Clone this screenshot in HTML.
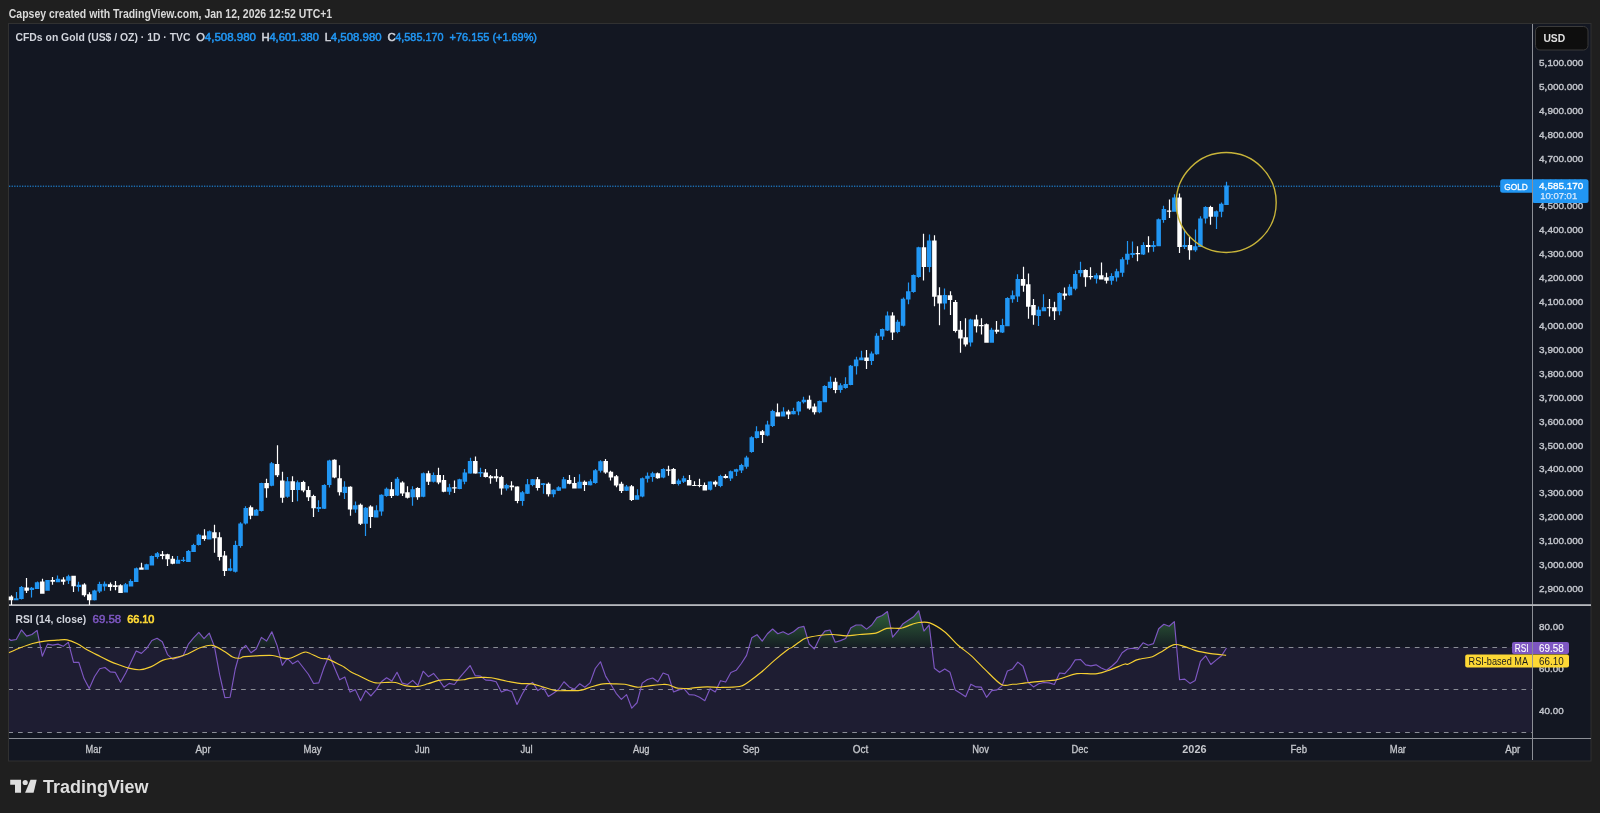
<!DOCTYPE html><html><head><meta charset="utf-8"><style>html,body{margin:0;padding:0;background:#1f1f1f;width:1600px;height:813px;overflow:hidden}</style></head><body><svg width="1600" height="813" viewBox="0 0 1600 813" style="display:block;will-change:transform;font-family:'Liberation Sans',sans-serif"><rect x="0" y="0" width="1600" height="813" fill="#1f1f1f"/><rect x="8.5" y="23.5" width="1582.5" height="737.5" fill="#131722" stroke="#313131" stroke-width="1"/><rect x="9" y="647.4" width="1523" height="85" fill="#1e1d32"/><text x="8.80" y="17.90" font-size="12.2" fill="#d9d9d9" font-weight="700" textLength="323.4" lengthAdjust="spacingAndGlyphs">Capsey created with TradingView.com, Jan 12, 2026 12:52 UTC+1</text><text x="15.50" y="40.90" font-size="11" fill="#d1d4dc" font-weight="700" textLength="175.0" lengthAdjust="spacingAndGlyphs">CFDs on Gold (US$ / OZ) · 1D · TVC</text><text x="196.20" y="40.90" font-size="11" fill="#d1d4dc" stroke="#d1d4dc" stroke-width="0.5" textLength="8.6" lengthAdjust="spacingAndGlyphs">O</text><text x="204.80" y="40.90" font-size="11" fill="#2196f3" stroke="#2196f3" stroke-width="0.5" textLength="51.2" lengthAdjust="spacingAndGlyphs">4,508.980</text><text x="261.40" y="40.90" font-size="11" fill="#d1d4dc" stroke="#d1d4dc" stroke-width="0.5" textLength="8.2" lengthAdjust="spacingAndGlyphs">H</text><text x="269.40" y="40.90" font-size="11" fill="#2196f3" stroke="#2196f3" stroke-width="0.5" textLength="49.6" lengthAdjust="spacingAndGlyphs">4,601.380</text><text x="324.80" y="40.90" font-size="11" fill="#d1d4dc" stroke="#d1d4dc" stroke-width="0.5" textLength="6.4" lengthAdjust="spacingAndGlyphs">L</text><text x="330.80" y="40.90" font-size="11" fill="#2196f3" stroke="#2196f3" stroke-width="0.5" textLength="50.8" lengthAdjust="spacingAndGlyphs">4,508.980</text><text x="387.40" y="40.90" font-size="11" fill="#d1d4dc" stroke="#d1d4dc" stroke-width="0.5" textLength="8.2" lengthAdjust="spacingAndGlyphs">C</text><text x="395.30" y="40.90" font-size="11" fill="#2196f3" stroke="#2196f3" stroke-width="0.5" textLength="48.2" lengthAdjust="spacingAndGlyphs">4,585.170</text><text x="449.60" y="40.90" font-size="11" fill="#2196f3" stroke="#2196f3" stroke-width="0.5" textLength="87.4" lengthAdjust="spacingAndGlyphs">+76.155 (+1.69%)</text><rect x="1532" y="24" width="1" height="736" fill="#8c8f96"/><rect x="9" y="604.2" width="1582" height="1.8" fill="#b6b8bd"/><rect x="9" y="738" width="1582" height="1" fill="#8c8f96"/><text x="1539.10" y="592.02" font-size="9.5" fill="#c0c3ca" stroke="#c0c3ca" stroke-width="0.4" textLength="44.2" lengthAdjust="spacingAndGlyphs">2,900.000</text><text x="1539.10" y="568.11" font-size="9.5" fill="#c0c3ca" stroke="#c0c3ca" stroke-width="0.4" textLength="44.2" lengthAdjust="spacingAndGlyphs">3,000.000</text><text x="1539.10" y="544.20" font-size="9.5" fill="#c0c3ca" stroke="#c0c3ca" stroke-width="0.4" textLength="44.2" lengthAdjust="spacingAndGlyphs">3,100.000</text><text x="1539.10" y="520.29" font-size="9.5" fill="#c0c3ca" stroke="#c0c3ca" stroke-width="0.4" textLength="44.2" lengthAdjust="spacingAndGlyphs">3,200.000</text><text x="1539.10" y="496.38" font-size="9.5" fill="#c0c3ca" stroke="#c0c3ca" stroke-width="0.4" textLength="44.2" lengthAdjust="spacingAndGlyphs">3,300.000</text><text x="1539.10" y="472.47" font-size="9.5" fill="#c0c3ca" stroke="#c0c3ca" stroke-width="0.4" textLength="44.2" lengthAdjust="spacingAndGlyphs">3,400.000</text><text x="1539.10" y="448.56" font-size="9.5" fill="#c0c3ca" stroke="#c0c3ca" stroke-width="0.4" textLength="44.2" lengthAdjust="spacingAndGlyphs">3,500.000</text><text x="1539.10" y="424.65" font-size="9.5" fill="#c0c3ca" stroke="#c0c3ca" stroke-width="0.4" textLength="44.2" lengthAdjust="spacingAndGlyphs">3,600.000</text><text x="1539.10" y="400.74" font-size="9.5" fill="#c0c3ca" stroke="#c0c3ca" stroke-width="0.4" textLength="44.2" lengthAdjust="spacingAndGlyphs">3,700.000</text><text x="1539.10" y="376.83" font-size="9.5" fill="#c0c3ca" stroke="#c0c3ca" stroke-width="0.4" textLength="44.2" lengthAdjust="spacingAndGlyphs">3,800.000</text><text x="1539.10" y="352.92" font-size="9.5" fill="#c0c3ca" stroke="#c0c3ca" stroke-width="0.4" textLength="44.2" lengthAdjust="spacingAndGlyphs">3,900.000</text><text x="1539.10" y="329.01" font-size="9.5" fill="#c0c3ca" stroke="#c0c3ca" stroke-width="0.4" textLength="44.2" lengthAdjust="spacingAndGlyphs">4,000.000</text><text x="1539.10" y="305.10" font-size="9.5" fill="#c0c3ca" stroke="#c0c3ca" stroke-width="0.4" textLength="44.2" lengthAdjust="spacingAndGlyphs">4,100.000</text><text x="1539.10" y="281.19" font-size="9.5" fill="#c0c3ca" stroke="#c0c3ca" stroke-width="0.4" textLength="44.2" lengthAdjust="spacingAndGlyphs">4,200.000</text><text x="1539.10" y="257.28" font-size="9.5" fill="#c0c3ca" stroke="#c0c3ca" stroke-width="0.4" textLength="44.2" lengthAdjust="spacingAndGlyphs">4,300.000</text><text x="1539.10" y="233.37" font-size="9.5" fill="#c0c3ca" stroke="#c0c3ca" stroke-width="0.4" textLength="44.2" lengthAdjust="spacingAndGlyphs">4,400.000</text><text x="1539.10" y="209.46" font-size="9.5" fill="#c0c3ca" stroke="#c0c3ca" stroke-width="0.4" textLength="44.2" lengthAdjust="spacingAndGlyphs">4,500.000</text><text x="1539.10" y="185.55" font-size="9.5" fill="#c0c3ca" stroke="#c0c3ca" stroke-width="0.4" textLength="44.2" lengthAdjust="spacingAndGlyphs">4,600.000</text><text x="1539.10" y="161.64" font-size="9.5" fill="#c0c3ca" stroke="#c0c3ca" stroke-width="0.4" textLength="44.2" lengthAdjust="spacingAndGlyphs">4,700.000</text><text x="1539.10" y="137.73" font-size="9.5" fill="#c0c3ca" stroke="#c0c3ca" stroke-width="0.4" textLength="44.2" lengthAdjust="spacingAndGlyphs">4,800.000</text><text x="1539.10" y="113.82" font-size="9.5" fill="#c0c3ca" stroke="#c0c3ca" stroke-width="0.4" textLength="44.2" lengthAdjust="spacingAndGlyphs">4,900.000</text><text x="1539.10" y="89.91" font-size="9.5" fill="#c0c3ca" stroke="#c0c3ca" stroke-width="0.4" textLength="44.2" lengthAdjust="spacingAndGlyphs">5,000.000</text><text x="1539.10" y="66.00" font-size="9.5" fill="#c0c3ca" stroke="#c0c3ca" stroke-width="0.4" textLength="44.2" lengthAdjust="spacingAndGlyphs">5,100.000</text><rect x="1535.5" y="26.5" width="52.5" height="23.5" rx="4.5" fill="#0e0e0e" stroke="#3b3b3b" stroke-width="1"/><text x="1543.40" y="41.90" font-size="11" fill="#e0e0e0" font-weight="700" textLength="21.8" lengthAdjust="spacingAndGlyphs">USD</text><text x="85.50" y="753.30" font-size="10" fill="#c5c7cc" stroke="#c5c7cc" stroke-width="0.3" textLength="16" lengthAdjust="spacingAndGlyphs">Mar</text><text x="195.50" y="753.30" font-size="10" fill="#c5c7cc" stroke="#c5c7cc" stroke-width="0.3" textLength="15.2" lengthAdjust="spacingAndGlyphs">Apr</text><text x="303.50" y="753.30" font-size="10" fill="#c5c7cc" stroke="#c5c7cc" stroke-width="0.3" textLength="18" lengthAdjust="spacingAndGlyphs">May</text><text x="414.75" y="753.30" font-size="10" fill="#c5c7cc" stroke="#c5c7cc" stroke-width="0.3" textLength="15" lengthAdjust="spacingAndGlyphs">Jun</text><text x="520.50" y="753.30" font-size="10" fill="#c5c7cc" stroke="#c5c7cc" stroke-width="0.3" textLength="12.2" lengthAdjust="spacingAndGlyphs">Jul</text><text x="633.00" y="753.30" font-size="10" fill="#c5c7cc" stroke="#c5c7cc" stroke-width="0.3" textLength="16.5" lengthAdjust="spacingAndGlyphs">Aug</text><text x="742.75" y="753.30" font-size="10" fill="#c5c7cc" stroke="#c5c7cc" stroke-width="0.3" textLength="16.7" lengthAdjust="spacingAndGlyphs">Sep</text><text x="852.75" y="753.30" font-size="10" fill="#c5c7cc" stroke="#c5c7cc" stroke-width="0.3" textLength="15.5" lengthAdjust="spacingAndGlyphs">Oct</text><text x="972.25" y="753.30" font-size="10" fill="#c5c7cc" stroke="#c5c7cc" stroke-width="0.3" textLength="16.7" lengthAdjust="spacingAndGlyphs">Nov</text><text x="1071.55" y="753.30" font-size="10" fill="#c5c7cc" stroke="#c5c7cc" stroke-width="0.3" textLength="16.7" lengthAdjust="spacingAndGlyphs">Dec</text><text x="1182.30" y="753.30" font-size="10" fill="#c5c7cc" font-weight="700" textLength="24.2" lengthAdjust="spacingAndGlyphs">2026</text><text x="1290.50" y="753.30" font-size="10" fill="#c5c7cc" stroke="#c5c7cc" stroke-width="0.3" textLength="16.5" lengthAdjust="spacingAndGlyphs">Feb</text><text x="1389.80" y="753.30" font-size="10" fill="#c5c7cc" stroke="#c5c7cc" stroke-width="0.3" textLength="16.2" lengthAdjust="spacingAndGlyphs">Mar</text><text x="1505.25" y="753.30" font-size="10" fill="#c5c7cc" stroke="#c5c7cc" stroke-width="0.3" textLength="15" lengthAdjust="spacingAndGlyphs">Apr</text><line x1="9" y1="647.50" x2="1532" y2="647.50" stroke="#8a8d96" stroke-width="1" stroke-dasharray="4.7 5" stroke-dashoffset="0.7"/><line x1="9" y1="689.50" x2="1532" y2="689.50" stroke="#8a8d96" stroke-width="1" stroke-dasharray="4.7 5" stroke-dashoffset="0.7"/><line x1="9" y1="732.50" x2="1532" y2="732.50" stroke="#8a8d96" stroke-width="1" stroke-dasharray="4.7 5" stroke-dashoffset="0.7"/><text x="1539.10" y="629.70" font-size="9.5" fill="#c0c3ca" stroke="#c0c3ca" stroke-width="0.4" textLength="24.6" lengthAdjust="spacingAndGlyphs">80.00</text><text x="1539.10" y="672.00" font-size="9.5" fill="#c0c3ca" stroke="#c0c3ca" stroke-width="0.4" textLength="24.6" lengthAdjust="spacingAndGlyphs">60.00</text><text x="1539.10" y="714.10" font-size="9.5" fill="#c0c3ca" stroke="#c0c3ca" stroke-width="0.4" textLength="24.6" lengthAdjust="spacingAndGlyphs">40.00</text><text x="15.50" y="623.30" font-size="11" fill="#d1d4dc" font-weight="700" textLength="70.6" lengthAdjust="spacingAndGlyphs">RSI (14, close)</text><text x="92.60" y="623.30" font-size="11" fill="#7e57c2" stroke="#7e57c2" stroke-width="0.5" textLength="28.6" lengthAdjust="spacingAndGlyphs">69.58</text><text x="127.20" y="623.30" font-size="11" fill="#fdd835" stroke="#fdd835" stroke-width="0.7" textLength="27.2" lengthAdjust="spacingAndGlyphs">66.10</text><defs><linearGradient id="gg" x1="0" y1="606" x2="0" y2="647.4" gradientUnits="userSpaceOnUse"><stop offset="0" stop-color="#4caf50" stop-opacity="0.55"/><stop offset="1" stop-color="#4caf50" stop-opacity="0.04"/></linearGradient><clipPath id="ob"><rect x="9" y="606" width="1523" height="41.4"/></clipPath></defs><path d="M9.00 638.96 L11.00 640.44 L16.22 639.46 L21.43 629.99 L26.65 636.14 L31.87 634.54 L37.08 630.35 L42.30 656.18 L47.52 644.13 L52.73 645.11 L57.95 644.13 L63.17 646.34 L68.38 642.29 L73.60 662.33 L78.82 662.33 L84.03 678.57 L89.25 688.41 L94.47 676.73 L99.68 668.73 L104.90 667.50 L110.12 671.81 L115.33 672.42 L120.55 682.26 L125.77 673.04 L130.98 661.97 L136.20 650.90 L141.42 653.36 L146.63 648.44 L151.85 640.44 L157.07 638.23 L162.28 641.67 L167.50 654.59 L172.72 659.14 L177.93 657.66 L183.15 655.82 L188.37 644.13 L193.58 637.98 L198.80 632.45 L204.02 638.60 L209.23 633.06 L214.45 646.59 L219.67 674.88 L224.88 697.64 L230.10 697.27 L235.32 668.73 L240.53 650.28 L245.75 645.36 L250.97 652.74 L256.18 649.05 L261.40 637.37 L266.62 641.06 L271.84 631.83 L277.05 645.36 L282.27 665.29 L287.49 658.28 L292.70 663.81 L297.92 660.74 L303.14 667.50 L308.35 674.27 L313.57 683.49 L318.79 682.88 L324.00 667.50 L329.22 655.20 L334.44 667.50 L339.65 679.80 L344.87 677.09 L350.09 692.10 L355.30 689.63 L360.52 700.72 L365.74 690.57 L370.95 695.99 L376.17 689.90 L381.39 681.78 L386.60 677.72 L391.82 681.10 L397.04 672.31 L402.25 683.13 L407.47 684.48 L412.69 680.42 L417.90 685.57 L423.12 671.22 L428.34 676.64 L433.55 673.39 L438.77 679.75 L443.99 687.19 L449.20 683.40 L454.42 684.48 L459.64 677.72 L464.85 671.63 L470.07 665.54 L475.29 675.69 L480.50 676.09 L485.72 680.15 L490.94 680.42 L496.15 681.78 L501.37 691.93 L506.59 689.90 L511.80 691.52 L517.02 704.51 L522.24 693.96 L527.45 685.16 L532.67 682.45 L537.89 690.57 L543.10 687.19 L548.32 696.39 L553.54 693.28 L558.75 689.22 L563.97 681.78 L569.19 686.92 L574.40 689.22 L579.62 683.81 L584.84 687.19 L590.05 682.86 L595.27 668.52 L600.49 661.75 L605.70 676.37 L610.92 684.48 L616.14 693.28 L621.35 699.37 L626.57 694.63 L631.79 708.17 L637.00 702.75 L642.22 683.13 L647.44 679.48 L652.65 677.99 L657.87 681.78 L663.09 672.98 L668.30 675.01 L673.52 691.93 L678.74 689.90 L683.95 688.54 L689.17 694.63 L694.39 695.04 L699.60 697.34 L704.82 700.72 L710.04 688.81 L715.25 691.93 L720.47 680.70 L725.69 682.05 L730.90 672.58 L736.12 670.28 L741.34 663.51 L746.55 655.39 L751.77 637.80 L756.99 634.69 L762.20 641.18 L767.42 633.74 L772.64 629.00 L777.85 633.74 L783.07 631.71 L788.29 634.42 L793.50 631.80 L798.72 627.47 L803.94 626.39 L809.16 643.98 L814.37 648.99 L819.59 637.89 L824.81 631.12 L830.02 630.04 L835.24 642.22 L840.46 640.60 L845.67 638.57 L850.89 627.74 L856.11 625.03 L861.32 625.03 L866.54 629.09 L871.76 625.03 L876.97 617.59 L882.19 615.56 L887.41 611.50 L892.62 637.21 L897.84 630.85 L903.06 623.68 L908.27 620.21 L913.49 616.83 L918.71 610.74 L923.92 631.03 L929.14 624.94 L934.36 668.25 L939.57 672.31 L944.79 668.92 L950.01 672.31 L955.22 689.90 L960.44 693.28 L965.66 696.66 L970.87 684.21 L976.09 686.92 L981.31 687.19 L986.52 697.34 L991.74 690.57 L996.96 689.90 L1002.17 685.57 L1007.39 670.95 L1012.61 668.92 L1017.82 662.16 L1023.04 666.22 L1028.26 682.45 L1033.47 686.92 L1038.69 683.81 L1043.91 682.45 L1049.12 682.86 L1054.34 684.48 L1059.56 672.98 L1064.77 673.66 L1069.99 667.98 L1075.21 659.86 L1080.42 659.45 L1085.64 664.86 L1090.86 665.81 L1096.07 664.86 L1101.29 667.98 L1106.51 670.28 L1111.72 666.22 L1116.94 661.48 L1122.16 652.68 L1127.37 649.03 L1132.59 648.22 L1137.81 649.30 L1143.02 642.81 L1148.24 645.24 L1153.46 643.62 L1158.67 628.73 L1163.89 624.27 L1169.11 626.30 L1174.32 621.56 L1179.54 679.75 L1184.76 679.07 L1189.97 683.40 L1195.19 680.42 L1200.41 661.48 L1205.62 655.80 L1210.84 664.46 L1216.06 660.13 L1221.27 656.07 L1226.49 647.95 L1226.49 647.4 L9.00 647.4 Z" fill="url(#gg)" clip-path="url(#ob)"/><path d="M9.00 638.96 L11.00 640.44 L16.22 639.46 L21.43 629.99 L26.65 636.14 L31.87 634.54 L37.08 630.35 L42.30 656.18 L47.52 644.13 L52.73 645.11 L57.95 644.13 L63.17 646.34 L68.38 642.29 L73.60 662.33 L78.82 662.33 L84.03 678.57 L89.25 688.41 L94.47 676.73 L99.68 668.73 L104.90 667.50 L110.12 671.81 L115.33 672.42 L120.55 682.26 L125.77 673.04 L130.98 661.97 L136.20 650.90 L141.42 653.36 L146.63 648.44 L151.85 640.44 L157.07 638.23 L162.28 641.67 L167.50 654.59 L172.72 659.14 L177.93 657.66 L183.15 655.82 L188.37 644.13 L193.58 637.98 L198.80 632.45 L204.02 638.60 L209.23 633.06 L214.45 646.59 L219.67 674.88 L224.88 697.64 L230.10 697.27 L235.32 668.73 L240.53 650.28 L245.75 645.36 L250.97 652.74 L256.18 649.05 L261.40 637.37 L266.62 641.06 L271.84 631.83 L277.05 645.36 L282.27 665.29 L287.49 658.28 L292.70 663.81 L297.92 660.74 L303.14 667.50 L308.35 674.27 L313.57 683.49 L318.79 682.88 L324.00 667.50 L329.22 655.20 L334.44 667.50 L339.65 679.80 L344.87 677.09 L350.09 692.10 L355.30 689.63 L360.52 700.72 L365.74 690.57 L370.95 695.99 L376.17 689.90 L381.39 681.78 L386.60 677.72 L391.82 681.10 L397.04 672.31 L402.25 683.13 L407.47 684.48 L412.69 680.42 L417.90 685.57 L423.12 671.22 L428.34 676.64 L433.55 673.39 L438.77 679.75 L443.99 687.19 L449.20 683.40 L454.42 684.48 L459.64 677.72 L464.85 671.63 L470.07 665.54 L475.29 675.69 L480.50 676.09 L485.72 680.15 L490.94 680.42 L496.15 681.78 L501.37 691.93 L506.59 689.90 L511.80 691.52 L517.02 704.51 L522.24 693.96 L527.45 685.16 L532.67 682.45 L537.89 690.57 L543.10 687.19 L548.32 696.39 L553.54 693.28 L558.75 689.22 L563.97 681.78 L569.19 686.92 L574.40 689.22 L579.62 683.81 L584.84 687.19 L590.05 682.86 L595.27 668.52 L600.49 661.75 L605.70 676.37 L610.92 684.48 L616.14 693.28 L621.35 699.37 L626.57 694.63 L631.79 708.17 L637.00 702.75 L642.22 683.13 L647.44 679.48 L652.65 677.99 L657.87 681.78 L663.09 672.98 L668.30 675.01 L673.52 691.93 L678.74 689.90 L683.95 688.54 L689.17 694.63 L694.39 695.04 L699.60 697.34 L704.82 700.72 L710.04 688.81 L715.25 691.93 L720.47 680.70 L725.69 682.05 L730.90 672.58 L736.12 670.28 L741.34 663.51 L746.55 655.39 L751.77 637.80 L756.99 634.69 L762.20 641.18 L767.42 633.74 L772.64 629.00 L777.85 633.74 L783.07 631.71 L788.29 634.42 L793.50 631.80 L798.72 627.47 L803.94 626.39 L809.16 643.98 L814.37 648.99 L819.59 637.89 L824.81 631.12 L830.02 630.04 L835.24 642.22 L840.46 640.60 L845.67 638.57 L850.89 627.74 L856.11 625.03 L861.32 625.03 L866.54 629.09 L871.76 625.03 L876.97 617.59 L882.19 615.56 L887.41 611.50 L892.62 637.21 L897.84 630.85 L903.06 623.68 L908.27 620.21 L913.49 616.83 L918.71 610.74 L923.92 631.03 L929.14 624.94 L934.36 668.25 L939.57 672.31 L944.79 668.92 L950.01 672.31 L955.22 689.90 L960.44 693.28 L965.66 696.66 L970.87 684.21 L976.09 686.92 L981.31 687.19 L986.52 697.34 L991.74 690.57 L996.96 689.90 L1002.17 685.57 L1007.39 670.95 L1012.61 668.92 L1017.82 662.16 L1023.04 666.22 L1028.26 682.45 L1033.47 686.92 L1038.69 683.81 L1043.91 682.45 L1049.12 682.86 L1054.34 684.48 L1059.56 672.98 L1064.77 673.66 L1069.99 667.98 L1075.21 659.86 L1080.42 659.45 L1085.64 664.86 L1090.86 665.81 L1096.07 664.86 L1101.29 667.98 L1106.51 670.28 L1111.72 666.22 L1116.94 661.48 L1122.16 652.68 L1127.37 649.03 L1132.59 648.22 L1137.81 649.30 L1143.02 642.81 L1148.24 645.24 L1153.46 643.62 L1158.67 628.73 L1163.89 624.27 L1169.11 626.30 L1174.32 621.56 L1179.54 679.75 L1184.76 679.07 L1189.97 683.40 L1195.19 680.42 L1200.41 661.48 L1205.62 655.80 L1210.84 664.46 L1216.06 660.13 L1221.27 656.07 L1226.49 647.95" fill="none" stroke="#7e57c2" stroke-width="1.15" stroke-linejoin="round"/><path d="M9.00 652.74 C10.88 651.92 16.37 649.36 20.30 647.82 C24.23 646.28 28.50 644.64 32.60 643.52 C36.70 642.39 40.80 641.61 44.90 641.06 C49.00 640.50 53.51 640.40 57.20 640.19 C60.89 639.99 63.76 639.27 67.04 639.83 C70.32 640.38 73.40 641.77 76.88 643.52 C80.37 645.26 84.06 648.13 87.95 650.28 C91.85 652.43 96.56 654.59 100.25 656.43 C103.94 658.28 106.91 659.94 110.09 661.35 C113.27 662.77 116.22 663.79 119.35 664.92 C122.48 666.05 125.49 667.32 128.88 668.12 C132.27 668.92 136.04 669.92 139.68 669.71 C143.32 669.51 146.86 668.48 150.75 666.89 C154.65 665.29 158.95 661.66 163.05 660.12 C167.15 658.58 171.25 658.69 175.35 657.66 C179.45 656.64 183.55 655.61 187.65 653.97 C191.75 652.33 195.85 649.26 199.95 647.82 C204.05 646.39 208.15 644.75 212.25 645.36 C216.35 645.98 221.16 649.56 224.55 651.51 C227.94 653.46 230.17 655.92 232.58 657.05 C235.00 658.17 237.08 658.34 239.04 658.28 C240.99 658.21 241.37 657.09 244.30 656.68 C247.23 656.27 251.89 656.02 256.60 655.82 C261.32 655.61 268.49 655.14 272.59 655.45 C276.69 655.75 278.33 657.19 281.20 657.66 C284.07 658.13 286.12 659.14 289.81 658.28 C293.50 657.41 300.27 653.42 303.34 652.49 C306.42 651.57 305.39 651.78 308.26 652.74 C311.13 653.70 317.28 657.21 320.56 658.28 C323.84 659.34 324.66 658.01 327.94 659.14 C331.22 660.26 337.56 663.75 340.24 665.04 C342.92 666.33 342.26 665.79 344.00 666.89 C345.74 668.00 348.41 670.33 350.67 671.69 C352.92 673.04 353.68 673.22 357.53 675.01 C361.38 676.81 369.26 681.21 373.77 682.45 C378.28 683.70 380.99 682.45 384.60 682.45 C388.20 682.45 392.04 681.94 395.42 682.45 C398.80 682.97 401.28 684.89 404.89 685.57 C408.50 686.24 413.24 686.81 417.07 686.51 C420.91 686.22 424.29 684.82 427.90 683.81 C431.51 682.79 435.11 681.15 438.72 680.42 C442.33 679.70 446.67 679.52 449.55 679.48 C452.43 679.43 453.63 680.11 456.00 680.15 C458.37 680.20 461.50 680.04 463.76 679.75 C466.01 679.46 466.76 678.78 469.53 678.40 C472.30 678.01 476.75 677.56 480.36 677.45 C483.97 677.34 487.35 677.22 491.18 677.72 C495.02 678.21 498.63 679.48 503.36 680.42 C508.10 681.37 514.86 682.84 519.60 683.40 C524.34 683.97 527.72 683.18 531.78 683.81 C535.84 684.44 539.90 686.06 543.96 687.19 C548.02 688.32 552.13 690.01 556.14 690.57 C560.14 691.14 564.68 690.57 568.00 690.57 C571.32 690.57 573.77 690.64 576.03 690.57 C578.28 690.51 578.81 690.84 581.53 690.17 C584.25 689.49 588.75 687.57 592.36 686.51 C595.97 685.45 599.80 684.26 603.18 683.81 C606.57 683.36 609.05 683.74 612.65 683.81 C616.26 683.88 620.77 683.65 624.83 684.21 C628.89 684.78 632.95 686.92 637.01 687.19 C641.07 687.46 644.91 686.29 649.19 685.84 C653.48 685.39 659.57 684.66 662.72 684.48 C665.88 684.30 665.88 684.19 668.14 684.76 C670.39 685.32 674.28 687.28 676.25 687.87 C678.23 688.45 678.04 688.16 680.00 688.27 C681.96 688.39 685.77 688.61 688.03 688.54 C690.28 688.48 690.36 688.14 693.53 687.87 C696.70 687.60 702.55 686.99 707.06 686.92 C711.57 686.85 715.18 687.53 720.60 687.46 C726.01 687.39 735.03 687.35 739.54 686.51 C744.05 685.68 744.05 684.82 747.66 682.45 C751.27 680.09 756.68 676.03 761.19 672.31 C765.70 668.58 770.21 663.96 774.72 660.13 C779.23 656.29 785.37 651.43 788.25 649.30 C791.13 647.17 790.14 648.57 792.00 647.36 C793.86 646.15 797.14 643.55 799.40 642.04 C801.65 640.53 802.25 639.39 805.53 638.29 C808.81 637.20 814.55 636.08 819.06 635.45 C823.57 634.82 828.08 634.44 832.60 634.51 C837.11 634.57 841.62 635.86 846.13 635.86 C850.64 635.86 854.70 634.96 859.66 634.51 C864.62 634.06 871.39 634.17 875.90 633.15 C880.41 632.14 882.89 629.21 886.72 628.42 C890.56 627.63 896.02 628.59 898.90 628.42 C901.78 628.24 901.81 628.06 904.00 627.38 C906.19 626.70 909.55 625.17 912.03 624.36 C914.51 623.55 915.94 622.75 918.88 622.51 C921.83 622.27 925.43 621.38 929.71 622.91 C934.00 624.45 939.86 627.99 944.60 631.71 C949.33 635.43 953.62 641.18 958.13 645.24 C962.64 649.30 967.15 652.01 971.66 656.07 C976.17 660.13 980.23 664.86 985.19 669.60 C990.15 674.34 996.92 682.05 1001.43 684.48 C1005.94 686.92 1009.83 684.26 1012.25 684.21 C1014.68 684.17 1014.04 684.39 1016.00 684.21 C1017.96 684.03 1021.77 683.42 1024.03 683.13 C1026.28 682.84 1026.36 682.79 1029.53 682.45 C1032.70 682.12 1038.78 681.48 1043.06 681.10 C1047.35 680.72 1051.86 680.72 1055.24 680.15 C1058.63 679.59 1059.75 678.80 1063.36 677.72 C1066.97 676.64 1071.25 674.34 1076.89 673.66 C1082.53 672.98 1091.55 674.34 1097.19 673.66 C1102.83 672.98 1106.21 671.18 1110.72 669.60 C1115.23 668.02 1121.37 665.09 1124.25 664.19 C1127.13 663.28 1126.04 664.86 1128.00 664.19 C1129.96 663.51 1133.77 661.03 1136.03 660.13 C1138.28 659.23 1138.81 659.34 1141.53 658.77 C1144.25 658.21 1148.75 658.10 1152.36 656.74 C1155.97 655.39 1159.57 652.68 1163.18 650.65 C1166.79 648.63 1170.40 645.24 1174.01 644.57 C1177.62 643.89 1181.23 645.58 1184.83 646.60 C1188.44 647.61 1191.60 649.53 1195.66 650.65 C1199.72 651.78 1204.91 652.68 1209.19 653.36 C1213.48 654.04 1218.55 654.38 1221.37 654.71 C1224.19 655.05 1225.32 655.28 1226.11 655.39" fill="none" stroke="#f5cf32" stroke-width="1.15"/><path fill="#2196f3" d="M15.90 591.88h1.2V600.14h-1.2ZM13.97 598.26h4.5v1.88h-4.5ZM20.90 585.88h1.2V599.38h-1.2ZM19.18 587.01h4.5v12.00h-4.5ZM30.90 587.01h1.2V597.51h-1.2ZM29.62 587.76h4.5v2.25h-4.5ZM36.90 581.38h1.2V588.88h-1.2ZM34.83 582.13h4.5v6.75h-4.5ZM46.90 579.88h1.2V590.76h-1.2ZM45.27 579.88h4.5v10.88h-4.5ZM56.90 575.38h1.2V582.13h-1.2ZM55.70 578.75h4.5v3.38h-4.5ZM67.90 574.63h1.2V584.01h-1.2ZM66.13 576.13h4.5v4.50h-4.5ZM77.90 581.76h1.2V591.51h-1.2ZM76.57 584.76h4.5v2.25h-4.5ZM93.90 589.63h1.2V600.51h-1.2ZM92.22 590.38h4.5v9.75h-4.5ZM98.90 581.76h1.2V593.01h-1.2ZM97.43 584.01h4.5v7.50h-4.5ZM103.90 581.46h1.2V590.87h-1.2ZM102.65 583.68h4.5v2.77h-4.5ZM124.90 583.12h1.2V592.54h-1.2ZM123.52 584.23h4.5v8.31h-4.5ZM129.90 579.25h1.2V586.45h-1.2ZM128.73 580.91h4.5v5.54h-4.5ZM135.90 567.62h1.2V582.02h-1.2ZM133.95 568.17h4.5v13.84h-4.5ZM145.90 563.74h1.2V569.83h-1.2ZM144.38 564.30h4.5v5.54h-4.5ZM150.90 555.44h1.2V565.40h-1.2ZM149.60 555.99h4.5v9.41h-4.5ZM156.90 552.12h1.2V558.76h-1.2ZM154.82 553.22h4.5v3.88h-4.5ZM176.90 555.99h1.2V563.74h-1.2ZM175.68 559.87h4.5v3.88h-4.5ZM182.90 557.10h1.2V562.08h-1.2ZM180.90 559.87h4.5v1.11h-4.5ZM187.90 549.90h1.2V562.08h-1.2ZM186.12 551.01h4.5v11.07h-4.5ZM192.90 543.81h1.2V552.12h-1.2ZM191.33 544.92h4.5v7.20h-4.5ZM197.90 533.85h1.2V545.39h-1.2ZM196.55 534.71h4.5v10.33h-4.5ZM208.90 530.41h1.2V539.54h-1.2ZM206.98 531.27h4.5v8.27h-4.5ZM229.90 558.82h1.2V571.22h-1.2ZM227.85 568.29h4.5v2.58h-4.5ZM234.90 540.74h1.2V572.60h-1.2ZM233.07 545.05h4.5v26.69h-4.5ZM239.90 522.31h1.2V547.63h-1.2ZM238.28 523.52h4.5v22.39h-4.5ZM244.90 506.30h1.2V524.38h-1.2ZM243.50 508.02h4.5v15.50h-4.5ZM255.90 508.88h1.2V515.77h-1.2ZM253.93 509.74h4.5v6.03h-4.5ZM260.90 482.71h1.2V511.47h-1.2ZM259.15 483.05h4.5v27.90h-4.5ZM270.90 462.04h1.2V486.15h-1.2ZM269.59 463.25h4.5v22.39h-4.5ZM286.90 477.02h1.2V497.69h-1.2ZM285.24 481.33h4.5v15.50h-4.5ZM296.90 480.47h1.2V501.13h-1.2ZM295.67 482.19h4.5v7.75h-4.5ZM317.90 500.35h1.2V512.04h-1.2ZM316.54 507.12h4.5v1.85h-4.5ZM323.90 484.36h1.2V508.96h-1.2ZM321.75 484.98h4.5v23.74h-4.5ZM328.90 459.76h1.2V487.44h-1.2ZM326.97 460.38h4.5v24.60h-4.5ZM343.90 481.29h1.2V499.12h-1.2ZM342.62 486.82h4.5v6.15h-4.5ZM354.90 501.58h1.2V512.65h-1.2ZM353.05 505.27h4.5v4.31h-4.5ZM364.90 507.12h1.2V536.02h-1.2ZM363.49 507.73h4.5v15.99h-4.5ZM375.90 505.27h1.2V517.57h-1.2ZM373.92 510.19h4.5v7.38h-4.5ZM380.90 494.20h1.2V515.73h-1.2ZM379.14 494.82h4.5v16.61h-4.5ZM385.90 487.44h1.2V496.66h-1.2ZM384.35 488.67h4.5v7.38h-4.5ZM396.90 476.98h1.2V496.05h-1.2ZM394.79 478.83h4.5v16.61h-4.5ZM411.90 486.13h1.2V505.81h-1.2ZM410.44 489.20h4.5v8.00h-4.5ZM422.90 472.60h1.2V497.20h-1.2ZM420.87 473.21h4.5v23.62h-4.5ZM432.90 472.60h1.2V482.44h-1.2ZM431.30 475.06h4.5v6.77h-4.5ZM448.90 483.67h1.2V494.74h-1.2ZM446.95 487.36h4.5v4.31h-4.5ZM458.90 478.75h1.2V489.20h-1.2ZM457.39 479.36h4.5v9.59h-4.5ZM463.90 468.91h1.2V484.28h-1.2ZM462.60 472.60h4.5v9.23h-4.5ZM469.90 457.84h1.2V473.83h-1.2ZM467.82 460.91h4.5v12.55h-4.5ZM479.90 467.68h1.2V476.90h-1.2ZM478.25 471.98h4.5v1.48h-4.5ZM505.90 483.67h1.2V490.43h-1.2ZM504.34 484.90h4.5v3.69h-4.5ZM521.90 491.05h1.2V505.81h-1.2ZM519.99 492.28h4.5v8.61h-4.5ZM526.90 479.11h1.2V494.12h-1.2ZM525.20 484.28h4.5v9.59h-4.5ZM531.90 479.11h1.2V486.13h-1.2ZM530.42 479.36h4.5v5.54h-4.5ZM542.90 483.05h1.2V493.87h-1.2ZM540.85 483.30h4.5v1.60h-4.5ZM552.90 489.20h1.2V497.20h-1.2ZM551.29 489.82h4.5v4.31h-4.5ZM557.90 486.13h1.2V491.05h-1.2ZM556.50 487.36h4.5v3.32h-4.5ZM562.90 476.90h1.2V488.59h-1.2ZM561.72 479.36h4.5v9.23h-4.5ZM578.90 474.19h1.2V488.59h-1.2ZM577.37 481.82h4.5v6.77h-4.5ZM589.90 479.36h1.2V485.51h-1.2ZM587.80 481.21h4.5v4.06h-4.5ZM594.90 468.91h1.2V483.67h-1.2ZM593.02 470.14h4.5v12.92h-4.5ZM599.90 460.30h1.2V472.60h-1.2ZM598.24 461.16h4.5v9.59h-4.5ZM625.90 484.90h1.2V491.05h-1.2ZM624.32 486.49h4.5v4.18h-4.5ZM636.90 489.20h1.2V499.66h-1.2ZM634.75 495.35h4.5v4.31h-4.5ZM641.90 477.52h1.2V497.20h-1.2ZM639.97 478.13h4.5v18.45h-4.5ZM646.90 472.60h1.2V482.44h-1.2ZM645.19 475.67h4.5v3.08h-4.5ZM651.90 471.73h1.2V481.82h-1.2ZM650.40 473.21h4.5v3.69h-4.5ZM662.90 468.29h1.2V478.13h-1.2ZM660.84 468.91h4.5v8.61h-4.5ZM677.90 478.75h1.2V485.51h-1.2ZM676.49 480.59h4.5v3.44h-4.5ZM682.90 475.67h1.2V483.05h-1.2ZM681.70 478.13h4.5v3.69h-4.5ZM709.90 481.21h1.2V490.43h-1.2ZM707.79 481.57h4.5v8.24h-4.5ZM719.90 474.87h1.2V487.17h-1.2ZM718.22 476.10h4.5v9.84h-4.5ZM729.90 470.57h1.2V481.02h-1.2ZM728.65 471.18h4.5v7.38h-4.5ZM735.90 468.72h1.2V476.10h-1.2ZM733.87 469.34h4.5v2.46h-4.5ZM740.90 463.80h1.2V473.03h-1.2ZM739.09 465.03h4.5v5.54h-4.5ZM745.90 455.81h1.2V468.72h-1.2ZM744.30 457.40h4.5v9.47h-4.5ZM750.90 436.13h1.2V452.73h-1.2ZM749.52 437.36h4.5v14.76h-4.5ZM755.90 426.29h1.2V438.59h-1.2ZM754.74 431.21h4.5v6.77h-4.5ZM766.90 420.75h1.2V436.13h-1.2ZM765.17 424.44h4.5v11.07h-4.5ZM771.90 409.68h1.2V426.90h-1.2ZM770.39 410.91h4.5v15.01h-4.5ZM782.90 407.22h1.2V416.45h-1.2ZM780.82 411.53h4.5v4.92h-4.5ZM792.90 407.84h1.2V414.60h-1.2ZM791.25 410.91h4.5v3.44h-4.5ZM797.90 401.07h1.2V415.22h-1.2ZM796.47 401.69h4.5v9.84h-4.5ZM802.90 396.77h1.2V403.53h-1.2ZM801.69 399.84h4.5v2.46h-4.5ZM818.90 400.46h1.2V413.37h-1.2ZM817.34 401.07h4.5v11.07h-4.5ZM823.90 385.25h1.2V402.17h-1.2ZM822.56 385.93h4.5v16.24h-4.5ZM829.90 376.45h1.2V388.63h-1.2ZM827.77 381.87h4.5v6.09h-4.5ZM839.90 383.22h1.2V392.69h-1.2ZM838.21 385.25h4.5v4.74h-4.5ZM844.90 377.13h1.2V388.63h-1.2ZM843.42 383.90h4.5v4.06h-4.5ZM849.90 364.95h1.2V385.25h-1.2ZM848.64 365.63h4.5v19.35h-4.5ZM855.90 356.83h1.2V374.42h-1.2ZM853.86 359.54h4.5v6.77h-4.5ZM860.90 350.74h1.2V360.22h-1.2ZM859.07 357.51h4.5v2.71h-4.5ZM870.90 351.42h1.2V364.95h-1.2ZM869.51 353.45h4.5v7.44h-4.5ZM875.90 333.15h1.2V354.80h-1.2ZM874.72 335.86h4.5v18.27h-4.5ZM881.90 328.42h1.2V339.92h-1.2ZM879.94 329.09h4.5v7.44h-4.5ZM886.90 311.50h1.2V331.12h-1.2ZM885.16 315.56h4.5v14.88h-4.5ZM896.90 319.72h1.2V333.25h-1.2ZM895.59 321.75h4.5v10.15h-4.5ZM902.90 297.40h1.2V326.49h-1.2ZM900.81 298.75h4.5v27.06h-4.5ZM907.90 282.51h1.2V304.16h-1.2ZM906.02 291.31h4.5v8.12h-4.5ZM912.90 274.39h1.2V292.66h-1.2ZM911.24 275.07h4.5v16.91h-4.5ZM917.90 246.65h1.2V277.77h-1.2ZM916.46 247.33h4.5v29.77h-4.5ZM928.90 234.47h1.2V272.36h-1.2ZM926.89 240.56h4.5v26.39h-4.5ZM943.90 288.60h1.2V309.57h-1.2ZM942.54 295.09h4.5v8.39h-4.5ZM969.90 318.86h1.2V346.60h-1.2ZM968.62 319.54h4.5v23.00h-4.5ZM990.90 327.66h1.2V342.81h-1.2ZM989.49 329.69h4.5v13.13h-4.5ZM1001.90 318.86h1.2V333.07h-1.2ZM999.92 324.95h4.5v7.44h-4.5ZM1006.90 297.21h1.2V326.31h-1.2ZM1005.14 297.89h4.5v28.42h-4.5ZM1011.90 290.45h1.2V302.63h-1.2ZM1010.36 295.18h4.5v4.06h-4.5ZM1016.90 274.21h1.2V301.95h-1.2ZM1015.57 278.94h4.5v17.59h-4.5ZM1037.90 306.45h1.2V326.08h-1.2ZM1036.44 309.84h4.5v6.09h-4.5ZM1042.90 294.28h1.2V311.19h-1.2ZM1041.66 307.13h4.5v4.06h-4.5ZM1058.90 292.25h1.2V315.25h-1.2ZM1057.31 292.92h4.5v18.27h-4.5ZM1068.90 284.13h1.2V295.63h-1.2ZM1067.74 286.83h4.5v8.39h-4.5ZM1074.90 270.60h1.2V290.22h-1.2ZM1072.96 273.98h4.5v14.88h-4.5ZM1079.90 261.80h1.2V276.68h-1.2ZM1078.17 269.92h4.5v3.38h-4.5ZM1095.90 273.30h1.2V283.45h-1.2ZM1093.82 275.33h4.5v3.38h-4.5ZM1110.90 273.37h1.2V284.87h-1.2ZM1109.47 276.08h4.5v4.74h-4.5ZM1115.90 268.63h1.2V281.49h-1.2ZM1114.69 271.34h4.5v6.09h-4.5ZM1121.90 257.13h1.2V276.75h-1.2ZM1119.91 259.16h4.5v13.53h-4.5ZM1126.90 240.89h1.2V264.57h-1.2ZM1125.12 253.75h4.5v6.09h-4.5ZM1131.90 241.57h1.2V257.81h-1.2ZM1130.34 253.07h4.5v2.03h-4.5ZM1142.90 242.25h1.2V255.10h-1.2ZM1140.77 244.95h4.5v9.47h-4.5ZM1152.90 240.89h1.2V251.72h-1.2ZM1151.21 244.95h4.5v2.03h-4.5ZM1157.90 218.57h1.2V246.31h-1.2ZM1156.42 219.24h4.5v27.06h-4.5ZM1162.90 205.71h1.2V222.63h-1.2ZM1161.64 209.09h4.5v10.83h-4.5ZM1173.90 194.21h1.2V211.80h-1.2ZM1172.07 197.59h4.5v14.21h-4.5ZM1183.90 229.39h1.2V249.01h-1.2ZM1182.51 244.95h4.5v2.03h-4.5ZM1194.90 229.39h1.2V251.72h-1.2ZM1192.94 246.31h4.5v4.06h-4.5ZM1199.90 216.13h1.2V246.88h-1.2ZM1198.16 218.59h4.5v28.29h-4.5ZM1204.90 206.29h1.2V223.51h-1.2ZM1203.37 206.90h4.5v11.69h-4.5ZM1215.90 210.59h1.2V229.04h-1.2ZM1213.81 211.21h4.5v5.54h-4.5ZM1220.90 202.60h1.2V217.36h-1.2ZM1219.02 203.83h4.5v8.00h-4.5ZM1225.90 181.69h1.2V205.06h-1.2ZM1224.24 185.38h4.5v19.68h-4.5Z"/><path fill="#ffffff" d="M10.90 595.26h1.2V605.01h-1.2ZM8.75 596.38h4.5v3.75h-4.5ZM25.90 578.00h1.2V593.01h-1.2ZM24.40 587.38h4.5v3.38h-4.5ZM41.90 578.75h1.2V593.76h-1.2ZM40.05 581.38h4.5v12.38h-4.5ZM51.90 576.88h1.2V584.76h-1.2ZM50.48 579.88h4.5v1.88h-4.5ZM62.90 577.25h1.2V584.76h-1.2ZM60.92 579.50h4.5v2.25h-4.5ZM72.90 575.75h1.2V591.88h-1.2ZM71.35 575.75h4.5v10.50h-4.5ZM83.90 583.26h1.2V596.76h-1.2ZM81.78 584.38h4.5v10.88h-4.5ZM88.90 592.26h1.2V605.01h-1.2ZM87.00 594.13h4.5v6.00h-4.5ZM109.90 582.57h1.2V590.87h-1.2ZM107.87 584.23h4.5v2.77h-4.5ZM114.90 580.91h1.2V590.32h-1.2ZM113.08 585.34h4.5v1.66h-4.5ZM119.90 584.23h1.2V593.09h-1.2ZM118.30 585.34h4.5v7.75h-4.5ZM140.90 562.64h1.2V569.83h-1.2ZM139.17 567.62h4.5v2.21h-4.5ZM161.90 551.01h1.2V559.31h-1.2ZM160.03 554.33h4.5v1.66h-4.5ZM166.90 553.78h1.2V565.96h-1.2ZM165.25 554.33h4.5v4.98h-4.5ZM171.90 555.99h1.2V564.30h-1.2ZM170.47 558.76h4.5v4.98h-4.5ZM203.90 529.20h1.2V540.74h-1.2ZM201.77 535.57h4.5v3.44h-4.5ZM213.90 524.73h1.2V552.79h-1.2ZM212.20 532.13h4.5v6.03h-4.5ZM218.90 532.13h1.2V560.54h-1.2ZM217.42 537.30h4.5v19.80h-4.5ZM223.90 551.07h1.2V576.04h-1.2ZM222.63 555.38h4.5v15.50h-4.5ZM249.90 505.44h1.2V519.21h-1.2ZM248.72 507.16h4.5v8.61h-4.5ZM265.90 478.75h1.2V497.69h-1.2ZM264.37 483.05h4.5v5.17h-4.5ZM276.90 445.17h1.2V477.02h-1.2ZM274.80 464.11h4.5v11.19h-4.5ZM281.90 471.86h1.2V502.86h-1.2ZM280.02 480.47h4.5v17.22h-4.5ZM291.90 476.16h1.2V501.99h-1.2ZM290.45 481.33h4.5v8.61h-4.5ZM302.90 480.67h1.2V492.36h-1.2ZM300.89 481.90h4.5v8.61h-4.5ZM307.90 486.21h1.2V500.97h-1.2ZM306.10 489.90h4.5v7.38h-4.5ZM312.90 494.82h1.2V516.96h-1.2ZM311.32 496.05h4.5v12.30h-4.5ZM333.90 459.15h1.2V478.21h-1.2ZM332.19 459.76h4.5v17.84h-4.5ZM338.90 465.30h1.2V495.43h-1.2ZM337.40 478.21h4.5v14.15h-4.5ZM349.90 486.21h1.2V515.73h-1.2ZM347.84 486.82h4.5v22.76h-4.5ZM359.90 503.43h1.2V524.95h-1.2ZM358.27 504.66h4.5v19.07h-4.5ZM369.90 505.27h1.2V528.03h-1.2ZM368.70 506.50h4.5v10.46h-4.5ZM390.90 481.90h1.2V497.89h-1.2ZM389.57 489.28h4.5v6.77h-4.5ZM401.90 481.29h1.2V496.05h-1.2ZM400.00 482.52h4.5v11.07h-4.5ZM406.90 486.13h1.2V498.43h-1.2ZM405.22 492.28h4.5v5.54h-4.5ZM416.90 487.36h1.2V499.66h-1.2ZM415.65 487.97h4.5v9.23h-4.5ZM427.90 470.75h1.2V484.90h-1.2ZM426.09 473.21h4.5v8.61h-4.5ZM437.90 467.68h1.2V484.28h-1.2ZM436.52 475.06h4.5v7.38h-4.5ZM442.90 475.06h1.2V492.28h-1.2ZM441.74 479.98h4.5v11.69h-4.5ZM453.90 480.59h1.2V492.89h-1.2ZM452.17 487.36h4.5v1.23h-4.5ZM474.90 456.61h1.2V473.83h-1.2ZM473.04 460.91h4.5v12.55h-4.5ZM484.90 468.91h1.2V477.52h-1.2ZM483.47 472.60h4.5v4.31h-4.5ZM489.90 475.06h1.2V483.67h-1.2ZM488.69 476.29h4.5v1.85h-4.5ZM495.90 468.91h1.2V481.82h-1.2ZM493.90 476.29h4.5v1.85h-4.5ZM500.90 475.67h1.2V494.74h-1.2ZM499.12 476.90h4.5v11.69h-4.5ZM510.90 481.21h1.2V490.43h-1.2ZM509.55 485.51h4.5v1.85h-4.5ZM516.90 486.13h1.2V503.35h-1.2ZM514.77 486.49h4.5v14.39h-4.5ZM536.90 476.90h1.2V490.43h-1.2ZM535.64 479.36h4.5v8.61h-4.5ZM547.90 482.44h1.2V496.58h-1.2ZM546.07 483.67h4.5v10.46h-4.5ZM568.90 475.06h1.2V484.28h-1.2ZM566.94 479.98h4.5v3.69h-4.5ZM573.90 476.90h1.2V488.59h-1.2ZM572.15 483.05h4.5v5.54h-4.5ZM583.90 480.59h1.2V491.05h-1.2ZM582.59 481.82h4.5v3.08h-4.5ZM604.90 459.07h1.2V473.83h-1.2ZM603.45 460.91h4.5v11.69h-4.5ZM609.90 470.75h1.2V480.59h-1.2ZM608.67 471.73h4.5v5.78h-4.5ZM615.90 475.06h1.2V487.36h-1.2ZM613.89 476.29h4.5v9.23h-4.5ZM620.90 481.82h1.2V492.89h-1.2ZM619.10 483.67h4.5v7.38h-4.5ZM630.90 484.90h1.2V500.89h-1.2ZM629.54 486.13h4.5v13.90h-4.5ZM656.90 472.60h1.2V478.75h-1.2ZM655.62 473.21h4.5v4.92h-4.5ZM667.90 465.83h1.2V475.67h-1.2ZM666.05 469.52h4.5v1.23h-4.5ZM672.90 468.04h1.2V484.28h-1.2ZM671.27 468.91h4.5v15.13h-4.5ZM688.90 475.06h1.2V485.51h-1.2ZM686.92 479.98h4.5v5.54h-4.5ZM693.90 481.21h1.2V485.51h-1.2ZM692.14 484.90h4.5v1.00h-4.5ZM698.90 478.75h1.2V487.36h-1.2ZM697.35 484.90h4.5v1.00h-4.5ZM703.90 482.44h1.2V490.43h-1.2ZM702.57 484.90h4.5v5.54h-4.5ZM714.90 480.59h1.2V486.74h-1.2ZM713.00 481.82h4.5v2.71h-4.5ZM724.90 474.26h1.2V478.56h-1.2ZM723.44 476.10h4.5v1.85h-4.5ZM761.90 429.98h1.2V442.89h-1.2ZM759.95 431.21h4.5v3.69h-4.5ZM776.90 403.53h1.2V416.45h-1.2ZM775.60 412.14h4.5v4.31h-4.5ZM787.90 409.68h1.2V418.91h-1.2ZM786.04 411.53h4.5v3.08h-4.5ZM808.90 395.54h1.2V409.68h-1.2ZM806.91 399.84h4.5v8.61h-4.5ZM813.90 403.53h1.2V414.60h-1.2ZM812.12 406.61h4.5v5.54h-4.5ZM834.90 377.81h1.2V393.37h-1.2ZM832.99 381.87h4.5v8.12h-4.5ZM865.90 350.07h1.2V369.01h-1.2ZM864.29 357.51h4.5v3.38h-4.5ZM891.90 312.18h1.2V339.92h-1.2ZM890.37 315.56h4.5v16.91h-4.5ZM922.90 233.80h1.2V280.48h-1.2ZM921.67 247.33h4.5v19.62h-4.5ZM933.90 235.15h1.2V306.19h-1.2ZM932.11 240.56h4.5v56.16h-4.5ZM938.90 287.25h1.2V325.14h-1.2ZM937.32 295.37h4.5v8.12h-4.5ZM949.90 291.31h1.2V314.99h-1.2ZM947.76 295.37h4.5v4.74h-4.5ZM954.90 299.92h1.2V332.40h-1.2ZM952.97 301.95h4.5v29.09h-4.5ZM959.90 320.89h1.2V352.69h-1.2ZM958.19 329.69h4.5v8.80h-4.5ZM964.90 318.19h1.2V346.60h-1.2ZM963.41 337.13h4.5v7.44h-4.5ZM975.90 314.80h1.2V332.40h-1.2ZM973.84 319.54h4.5v6.77h-4.5ZM980.90 318.19h1.2V334.42h-1.2ZM979.06 324.95h4.5v1.35h-4.5ZM985.90 323.60h1.2V342.81h-1.2ZM984.27 324.28h4.5v18.54h-4.5ZM995.90 320.89h1.2V333.75h-1.2ZM994.71 329.69h4.5v2.03h-4.5ZM1022.90 266.77h1.2V291.80h-1.2ZM1020.79 278.94h4.5v6.77h-4.5ZM1027.90 273.53h1.2V318.86h-1.2ZM1026.01 284.36h4.5v22.33h-4.5ZM1032.90 299.01h1.2V324.72h-1.2ZM1031.22 305.10h4.5v10.15h-4.5ZM1048.90 299.01h1.2V316.60h-1.2ZM1046.87 307.13h4.5v1.08h-4.5ZM1053.90 301.72h1.2V319.99h-1.2ZM1052.09 307.13h4.5v4.06h-4.5ZM1063.90 287.51h1.2V299.69h-1.2ZM1062.52 293.60h4.5v2.03h-4.5ZM1084.90 269.24h1.2V286.83h-1.2ZM1083.39 269.92h4.5v7.44h-4.5ZM1089.90 267.21h1.2V279.39h-1.2ZM1088.61 276.01h4.5v1.35h-4.5ZM1100.90 262.48h1.2V279.39h-1.2ZM1099.04 275.33h4.5v4.06h-4.5ZM1105.90 272.63h1.2V283.45h-1.2ZM1104.26 277.36h4.5v3.38h-4.5ZM1136.90 246.31h1.2V261.19h-1.2ZM1135.56 253.07h4.5v1.08h-4.5ZM1147.90 236.16h1.2V252.40h-1.2ZM1145.99 244.95h4.5v2.03h-4.5ZM1168.90 199.62h1.2V217.89h-1.2ZM1166.86 210.45h4.5v1.35h-4.5ZM1178.90 193.53h1.2V253.07h-1.2ZM1177.29 197.59h4.5v49.39h-4.5ZM1188.90 236.83h1.2V259.84h-1.2ZM1187.72 244.95h4.5v5.41h-4.5ZM1209.90 205.67h1.2V224.74h-1.2ZM1208.59 206.90h4.5v9.84h-4.5Z"/><line x1="9" y1="186.2" x2="1500" y2="186.2" stroke="#2196f3" stroke-width="1" stroke-dasharray="1.3 1.3"/><circle cx="1226.2" cy="202.5" r="50" fill="none" stroke="#c9b53a" stroke-width="1.4"/><rect x="1500.2" y="179.3" width="34" height="13.4" rx="2.5" fill="#2196f3"/><rect x="1532" y="179.3" width="56.5" height="23.8" rx="2.5" fill="#2196f3"/><text x="1504.20" y="189.60" font-size="9.2" fill="#ffffff" stroke="#ffffff" stroke-width="0.3" textLength="23.6" lengthAdjust="spacingAndGlyphs">GOLD</text><text x="1539.10" y="188.80" font-size="9.2" fill="#ffffff" stroke="#ffffff" stroke-width="0.35" textLength="44.2" lengthAdjust="spacingAndGlyphs">4,585.170</text><text x="1540.20" y="198.70" font-size="9" fill="#d6e9fd" stroke="#d6e9fd" stroke-width="0.25" textLength="37" lengthAdjust="spacingAndGlyphs">10:07:01</text><rect x="1532" y="179" width="1" height="25" fill="#8c8f96"/><rect x="1512" y="642.1" width="57" height="11.8" rx="2" fill="#7e57c2"/><text x="1514.70" y="651.60" font-size="10" fill="#ffffff" stroke="#ffffff" stroke-width="0.1" textLength="13.8" lengthAdjust="spacingAndGlyphs">RSI</text><text x="1539.10" y="651.60" font-size="10" fill="#ffffff" stroke="#ffffff" stroke-width="0.1" textLength="24.6" lengthAdjust="spacingAndGlyphs">69.58</text><rect x="1465.2" y="654.4" width="103.8" height="13.1" rx="2" fill="#fdd835"/><text x="1468.60" y="664.60" font-size="10" fill="#1c1c1c" textLength="59.4" lengthAdjust="spacingAndGlyphs">RSI-based MA</text><text x="1539.10" y="664.60" font-size="10" fill="#1c1c1c" textLength="24.6" lengthAdjust="spacingAndGlyphs">66.10</text><rect x="1532" y="642" width="1" height="26" fill="#8c8f96" opacity="0.9"/><g fill="#dedede"><path d="M10.2 779.8H21.05V792.7H15V784.8H10.2Z"/><circle cx="25.2" cy="782.5" r="2.6"/><path d="M30.5 779.8H36.7L33.6 792.7H25.1Z"/></g><text x="43.00" y="793.00" font-size="18" fill="#dedede" font-weight="700" textLength="105.5" lengthAdjust="spacingAndGlyphs">TradingView</text></svg></body></html>
